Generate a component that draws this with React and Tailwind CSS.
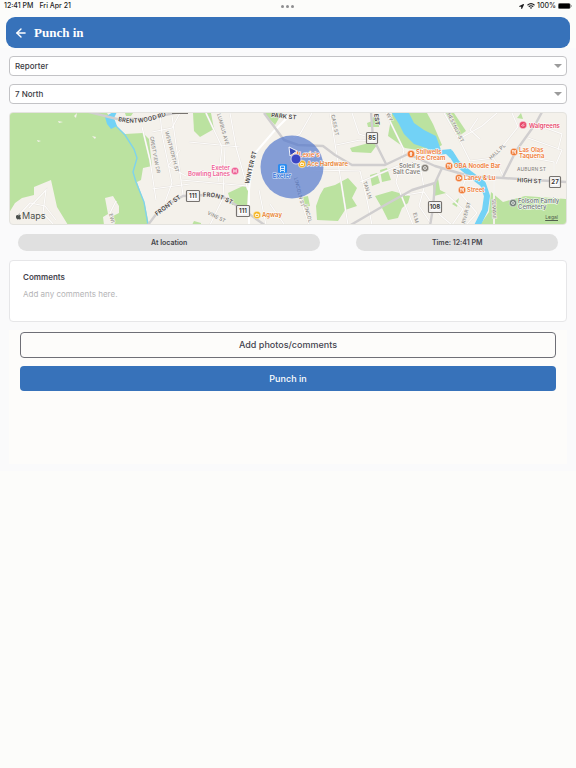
import React from 'react';
import { FaApple, FaLocationArrow } from 'react-icons/fa';
import { ArrowLeft } from 'lucide-react';

const GREENS = [
  'M9 113H107L118 128L125 134L143 133L149 139L152 166L143 168L141 180L137 182L145 205L149 225H68L57 207L51 180L34 187V195L22 198L15 203L9 213Z',
  'M125 113H133L131 116H126Z',
  'M193 113H211L214 129L200 137L194 131Z',
  'M264 113H282L275 125Z',
  'M228 193L245 185L248 191L247 205H232Z',
  'M192 225L194 221L201 223V225Z',
  'M350 148L365 144L374 140L377 145L371 153L352 152Z',
  'M367 123L372 121L373 117L379 118V127L368 127Z',
  'M320 195L324 188L335 185L348 178L357 188L352 198L357 206L345 210L338 221L317 220L316 206Z',
  'M370 175L377 173L380 183L372 186Z',
  'M380 170L387 168L391 180L382 182Z',
  'M375 196L392 191L410 196L408 203L402 208L398 218L388 220L382 208Z',
  'M303 197L308 196L310 206L305 207Z',
  'M392 113H427L433 124L442 145L430 152L405 148L388 136Z',
  'M446 113H454L466 131L459 136L451 125Z',
  'M433 185L438 178L440 190L446 193L434 196Z',
  'M480 225L489 212L491 192L503 202L525 196L567 199V225Z',
  'M517 118L521 113L523 119Z',
  'M452 204L459 198L457 207Z',
];

const MINOR_ROADS = [
  'M160 113L162 134L172 183L165 202',
  'M142 127L150 160L156 200',
  'M172 116L183 195',
  'M189 142L240 147',
  'M152 132L172 128L180 113',
  'M152 189L190 184',
  'M181 180L248 186',
  'M206 113L222 147L218 182',
  'M230 113L236 147L248 190',
  'M225 148L223 198L210 225',
  'M180 150L168 166L186 176',
  'M312 113L300 134L293 138',
  'M330 113L336 150L348 225',
  'M300 198L309 225',
  'M352 113L359 134L372 138',
  'M310 170L360 171L367 200L372 225',
  'M386 113L404 150L396 182L413 225',
  'M336 145L360 140L380 142',
  'M360 182L398 166',
  'M405 195L424 192L440 215L452 225',
  'M420 165L424 188L419 206L432 225',
  'M444 113L459 139L470 161',
  'M459 139L482 126L497 113',
  'M470 161L493 158L518 127L512 113',
  'M494 174V225',
  'M503 176L498 165L493 158',
  'M518 155L554 162V180',
  'M528 138L562 150L556 164',
  'M535 124L562 134L558 150',
  'M467 176L460 193L477 213L466 225',
  'M446 194L463 209L452 225',
  'M480 139L470 130L478 118',
  'M29 208L46 190L43 213L54 225',
  'M17 217L30 203L45 206L56 220',
  'M110 213L116 201',
  'M259 190L266 225',
  'M270 204L284 224',
  'M516 151L529 154',
];

const MAJOR_ROADS = [
  'M85 111L117 119L144 119L180 112',
  'M148 225L160 209L183 196L205 195L225 198L245 211L266 226',
  'M264 113L284 140L298 145L323 146L335 155L352 165L385 165L408 154L435 166L469 176L503 178L567 182',
  'M349 226L385 205L412 190L435 183L442 168',
  'M503 177L516 151L536 123L542 112',
  'M371 112L373 138L386 164',
  'M435 183L433 208L430 226',
];

const STREETS = [
  { name: 'BRENTWOOD RD', d: 'M118 121Q142 127 172 113', bold: true },
  { name: 'PARK ST', d: 'M271 117L301 120', bold: true },
  { name: 'CRESTVIEW DR', d: 'M150 137Q153 156 159 182' },
  { name: 'WENTWORTH ST', d: 'M165 132Q170 150 177 179' },
  { name: 'LUMBUS AVE', d: 'M217 114L227 150' },
  { name: 'WINTER ST', d: 'M249 184L258 146', bold: true },
  { name: 'FRONT ST', d: 'M157 216L184 196', bold: true },
  { name: 'FRONT ST', d: 'M203 197Q216 195 234 206', bold: true },
  { name: 'VINE ST', d: 'M207 214L229 225' },
  { name: 'CASS ST', d: 'M331 115L337 143' },
  { name: 'EST', d: 'M374 114L376 130', bold: true },
  { name: 'TAN LN', d: 'M363 182L371 206' },
  { name: 'LINCOLN ST', d: 'M294 178L303 214' },
  { name: 'LINCOL', d: 'M304 205L310 227' },
  { name: 'HESTNUT ST', d: 'M447 114L463 147' },
  { name: 'HALL PL', d: 'M491 160L510 142' },
  { name: 'AUBURN ST', d: 'M517 171L553 171' },
  { name: 'HIGH ST', d: 'M517 182L549 184', bold: true },
  { name: 'RIVER ST', d: 'M465 224L473 194' },
  { name: 'ELM', d: 'M413 213L416 226' },
  { name: 'SEMANI', d: 'M492 199L493 225' },
  { name: 'WY', d: 'M386 114L391 124' },
  { name: 'EWI', d: 'M109 214L112 226' },
];

const SHIELDS = [
  { n: '111', x: 193, y: 196 },
  { n: '111', x: 243, y: 211 },
  { n: '85', x: 372, y: 138 },
  { n: '108', x: 435, y: 207 },
  { n: '27', x: 555, y: 182 },
];

const PLACES = [
  { lines: ['Exeter', 'Bowling Lanes'], x: 230, y: 170, anchor: 'end', color: '#ee5f93', px: 235, py: 171, icon: 'bowl' },
  { lines: ['Agway'], x: 262, y: 217, color: '#e8812f', dot: '#f4b321', px: 257, py: 215, icon: 'bag' },
  { lines: ["Lexie's"], x: 299, y: 157, color: '#ef7a35', px: 295, py: 154, icon: 'food' },
  { lines: ['Ace Hardware'], x: 307, y: 166, color: '#e8812f', dot: '#f4b321', px: 302, py: 164, icon: 'bag' },
  { lines: ['Stillwells', 'Ice Cream'], x: 416, y: 154, color: '#ef7a35', px: 411, py: 154, icon: 'cone' },
  { lines: ["Soleil's", 'Salt Cave'], x: 420, y: 168, anchor: 'end', color: '#858078', px: 425, py: 168, icon: 'ring' },
  { lines: ['OBA Noodle Bar'], x: 454, y: 168, color: '#ef7a35', px: 449, py: 166, icon: 'food' },
  { lines: ['Laney & Lu'], x: 464, y: 180, color: '#ef7a35', px: 459, py: 178, icon: 'cup' },
  { lines: ['Street'], x: 467, y: 192, color: '#ef7a35', px: 462, py: 190, icon: 'food' },
  { lines: ['Walgreens'], x: 529, y: 128, color: '#e8486b', px: 523, py: 125, icon: 'pill' },
  { lines: ['Las Olas', 'Taqueria'], x: 519, y: 152, color: '#ef7a35', px: 514, py: 152, icon: 'food' },
  { lines: ['Folsom Family', 'Cemetery'], x: 518, y: 203, color: '#73807a', px: 513, py: 203, icon: 'ring' },
];

const PIN_PATHS = {
  food: 'M-1.6 -2V-.5M-.6 -2V-.5M-1.1 -1V2M1.3 2V-2Q.3 -1 .6 .4H1.3',
  cup: 'M-1.5 -1.2H1V1.2H-1.5ZM1 -.6H2V.5H1',
  bag: 'M-1.8 -.6H1.8L1.4 1.5H-1.4ZM-.9 -.6Q0 -2.4 .9 -.6',
  cone: 'M-1 -.6L0 2L1 -.6ZM-1 -1Q0 -2.6 1 -1',
  bowl: 'M-1.2 -1.8V1.8M1.2 -1.8V1.8M-1.2 0H1.2',
  pill: 'M-1.6 1L1 -1.6M-.2 1.6L1.6 -.2',
  ring: 'M-1.4 0A1.4 1.4 0 1 0 1.4 0A1.4 1.4 0 1 0 -1.4 0Z',
};

function Place({ place }) {
  return (
    <g>
      <circle cx={place.px} cy={place.py} r="3.8" fill={place.dot || place.color} stroke="#fff" strokeWidth=".5" />
      <path
        d={PIN_PATHS[place.icon]}
        transform={`translate(${place.px} ${place.py})`}
        fill="none"
        stroke="#fff"
        strokeWidth=".8"
      />
      {place.lines.map((line, i) => (
        <text
          key={line}
          x={place.x}
          y={place.y + i * 6}
          textAnchor={place.anchor || 'start'}
          fill={place.color}
          stroke="#fff"
          strokeWidth="1"
          paintOrder="stroke"
          className="text-[6px] font-semibold"
        >
          {line}
        </text>
      ))}
    </g>
  );
}

function MapView() {
  return (
    <section aria-label="Map" className="relative h-[113px] overflow-hidden rounded-sm border border-[#e4e3df] bg-[#f4f1eb]">
      <svg viewBox="10 113 556 111" preserveAspectRatio="xMidYMid slice" className="block h-full w-full">
        {GREENS.map((d) => (
          <path key={d} d={d} fill="#bbe2a0" />
        ))}
        <g fill="#f4f1eb">
          <path d="M105 198L113 196L119 206V213L113 216L115 225H104L103 217L108 214Z" />
          <path d="M37 140L41 141L38 142ZM58 121L63 122L59 123ZM74 116L77 113L76 118ZM92 136L96 137L95 139Z" />
        </g>
        <g fill="#72d2f6">
          <path d="M105 117L113 112H117L114 118L117 126L111 129L107 124Z" />
          <path d="M392 113H409L414 123L424 130L436 136L441 150L451 149L456 157L450 158L446 154L438 155L426 148L414 144L404 134L399 124Z" />
        </g>
        <path d="M116 126L125 135L134 149L137 158L133 172L136 182L144 202L148 225" fill="none" stroke="#7fd3ec" strokeWidth="1.4" />
        <path d="M450 152L457 163L470 174L483 184L487 196L485 210L477 226" fill="none" stroke="#72d2f6" strokeWidth="6" strokeLinejoin="round" />
        <g fill="none" stroke="#e6e2dd" strokeWidth="1.9">
          {MINOR_ROADS.map((d) => (
            <path key={d} d={d} />
          ))}
        </g>
        <g fill="none" stroke="#fdfcfb" strokeWidth="1.2">
          {MINOR_ROADS.map((d) => (
            <path key={d} d={d} />
          ))}
        </g>
        <path d="M249 190L250 180L256 152L275 130L292 113M249 188V225" fill="none" stroke="#fff" strokeWidth="2" />
        <g fill="none" stroke="#d0cecf" strokeWidth="2.4" strokeLinejoin="round">
          {MAJOR_ROADS.map((d) => (
            <path key={d} d={d} />
          ))}
        </g>
        {STREETS.map((s, i) => (
          <g key={i}>
            <path id={`street-${i}`} d={s.d} fill="none" />
            <text
              fill={s.bold ? '#45423f' : '#8b8884'}
              stroke="#f7f5f1"
              strokeWidth="1"
              paintOrder="stroke"
              className={s.bold ? 'text-[6px] font-semibold' : 'text-[5px] font-medium'}
            >
              <textPath href={`#street-${i}`}>{s.name}</textPath>
            </text>
          </g>
        ))}
        <path d="M172 112H188V114H172Z" fill="#77736f" />
        {SHIELDS.map((s) => {
          const w = s.n.length > 2 ? 13 : 11;
          return (
            <g key={`${s.n}-${s.x}`}>
              <rect x={s.x - w / 2} y={s.y - 5.5} width={w} height="11" rx="1" fill="#fff" stroke="#77736f" strokeWidth="1.2" />
              <rect x={s.x - w / 2 + 1.4} y={s.y - 4.1} width={w - 2.8} height="8.2" rx="1" fill="#fff" stroke="#c9c6c3" strokeWidth=".4" />
              <text x={s.x} y={s.y + 2} textAnchor="middle" fill="#3d3a38" className="text-[6px] font-bold">
                {s.n}
              </text>
            </g>
          );
        })}

        {/* accuracy radius sits under the labels */}
        <circle cx="292" cy="167" r="31.5" fill="#4a72cc" fillOpacity=".66" />
        {PLACES.map((p) => (
          <Place key={p.lines[0]} place={p} />
        ))}
        <rect x="278" y="164" width="9" height="9" rx="1.5" fill="#2b8cf0" />
        <path d="M280.5 166H284.5V170.5H280.5ZM281 171L280 172M284 171L285 172M280.5 168.5H284.5" fill="none" stroke="#fff" strokeWidth=".8" />
        <text x="282" y="178" textAnchor="middle" fill="#2d73d8" stroke="#dbe6fa" strokeWidth="1" paintOrder="stroke" className="text-[6px] font-semibold">
          Exeter
        </text>
        <path d="M289 147L297 151L290 156Z" fill="#3548b8" stroke="#fff" strokeWidth=".9" />
        <circle cx="296" cy="159" r="5" fill="#3a45c4" stroke="#e4e4f6" strokeWidth=".8" />
      </svg>
      <div className="absolute bottom-0.5 left-[5px] flex items-center text-[9px] leading-3 text-[#4b504c]">
        <FaApple className="h-[7px] w-[7px]" />
        Maps
      </div>
      <a href="#legal" className="absolute bottom-[3px] right-2 text-[5px] leading-2 text-[#52604d] underline">
        Legal
      </a>
    </section>
  );
}

function SelectField({ label, options }) {
  return (
    <div className="relative">
      <select
        aria-label={label}
        className="block h-5 w-full appearance-none rounded border border-[#c3c3c6] bg-white px-[5px] text-[8px] font-medium leading-3 text-[#3a3a42]"
      >
        {options.map((o) => (
          <option key={o}>{o}</option>
        ))}
      </select>
      <svg viewBox="0 0 8 4" className="pointer-events-none absolute right-[5px] top-2 h-1 w-2">
        <path d="M0 0H8L4 4Z" fill="#9b9b9b" />
      </svg>
    </div>
  );
}

function StatusBar() {
  return (
    <div className="grid h-3 grid-cols-3 items-center px-1 text-[7px] font-medium leading-3 text-[#1c1c1e]">
      <div className="flex gap-1.5">
        <span>12:41 PM</span>
        <span>Fri Apr 21</span>
      </div>
      <div className="flex justify-center gap-[2px]">
        <span className="h-[3px] w-[3px] rounded-full bg-[#8e8e90]" />
        <span className="h-[3px] w-[3px] rounded-full bg-[#8e8e90]" />
        <span className="h-[3px] w-[3px] rounded-full bg-[#8e8e90]" />
      </div>
      <div className="flex items-center justify-end gap-[2px]">
        <FaLocationArrow className="mr-px h-[5px] w-[5px]" />
        <svg viewBox="0 0 16 12" className="h-[6px] w-2" fill="none" stroke="currentColor" strokeWidth="2.2">
          <path d="M1 4.5Q8 -2 15 4.5M3.6 7.5Q8 3.6 12.4 7.5" />
          <path d="M5.8 9.4Q8 7.6 10.2 9.4L8 12Z" fill="currentColor" stroke="none" />
        </svg>
        <span>100%</span>
        <svg viewBox="0 0 28 12" className="h-[6px] w-[14px]">
          <rect x=".5" y=".5" width="24" height="11" rx="3" fill="#000" stroke="#8b8b8b" />
          <path d="M26 4V8Q28 7 28 6Q28 5 26 4Z" fill="#8b8b8b" />
        </svg>
      </div>
    </div>
  );
}

export default function App() {
  return (
    <div className="min-h-screen bg-[#fcfcfa] font-['Inter',sans-serif]">
      <StatusBar />
      <header className="mx-1.5 mt-[5px] flex h-[31px] items-center gap-1.5 rounded-[9px] bg-[#3772ba] px-2 text-white">
        <button type="button" aria-label="Back">
          <ArrowLeft className="h-3.5 w-3.5" strokeWidth={2.4} />
        </button>
        <h1 className="font-['Liberation_Serif',serif] text-[13px] font-bold leading-4">Punch in</h1>
      </header>

      <main className="bg-[#fafafb] px-[9px] pb-[7px] pt-2">
        <div className="flex flex-col gap-2">
          <SelectField label="Role" options={['Reporter']} />
          <SelectField label="Location" options={['7 North']} />
          <MapView />
        </div>

        <div className="mx-[9px] mt-[9px] flex gap-9 text-center text-[7px] font-semibold leading-[17px] text-[#45454b]">
          <div className="flex-[3] rounded-full bg-[#e0e0e0]">At location</div>
          <div className="flex-[2] rounded-full bg-[#e0e0e0]">Time: 12:41 PM</div>
        </div>

        <div className="mt-[9px] rounded border border-[#e6e6e8] bg-white px-[13px] pb-2 pt-[10px]">
          <label htmlFor="comments" className="block text-[8px] font-semibold leading-3 text-[#44444c]">
            Comments
          </label>
          <textarea
            id="comments"
            placeholder="Add any comments here."
            className="mt-[5px] block h-[25px] w-full resize-none text-[8px] leading-3 text-[#44444c] placeholder:text-[#b4b4b6]"
          />
        </div>

        <div className="mt-2 flex flex-col gap-2 bg-[#fdfcfa] px-[11px] pb-[73px] pt-0.5 text-[9px] font-medium">
          <button type="button" className="h-[26px] rounded border border-[#6f6f76] text-[#44444f]">
            Add photos/comments
          </button>
          <button type="button" className="h-[25px] rounded-sm bg-[#3772ba] text-white">
            Punch in
          </button>
        </div>
      </main>
    </div>
  );
}
